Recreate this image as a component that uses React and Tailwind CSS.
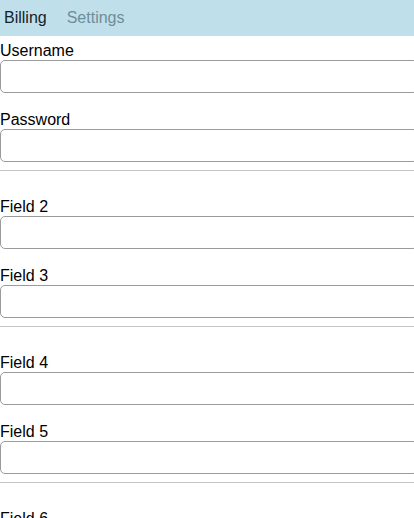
const groups = [
  ['Username', 'Password'],
  ['Field 2', 'Field 3'],
  ['Field 4', 'Field 5'],
  ['Field 6', 'Field 7'],
];

function Field({ label }) {
  return (
    <div>
      <label className="block text-[16px] leading-[19px] text-black">{label}</label>
      <input
        type="text"
        className="block h-[33px] w-[calc(100%+4px)] rounded-[5px] border border-[#9b9b9b] bg-white px-2 outline-none"
      />
    </div>
  );
}

export default function App() {
  return (
    <div className="min-h-screen overflow-x-hidden bg-white font-['Liberation_Sans',Arial,sans-serif]">
      <div className="flex h-9 items-center gap-5 bg-[#bfe0eb] pl-1 text-[16px]">
        <span className="text-[#14232b]">Billing</span>
        <span className="text-[#6f8d99]">Settings</span>
      </div>
      <div className="pt-[5px]">
        {groups.map((g, i) => (
          <div key={i}>
            <div className="flex flex-col gap-[17px]">
              {g.map((f) => (
                <Field key={f} label={f} />
              ))}
            </div>
            <hr className="mt-2 mb-[26px] border-t border-[#c4c4c4]" />
          </div>
        ))}
      </div>
    </div>
  );
}
